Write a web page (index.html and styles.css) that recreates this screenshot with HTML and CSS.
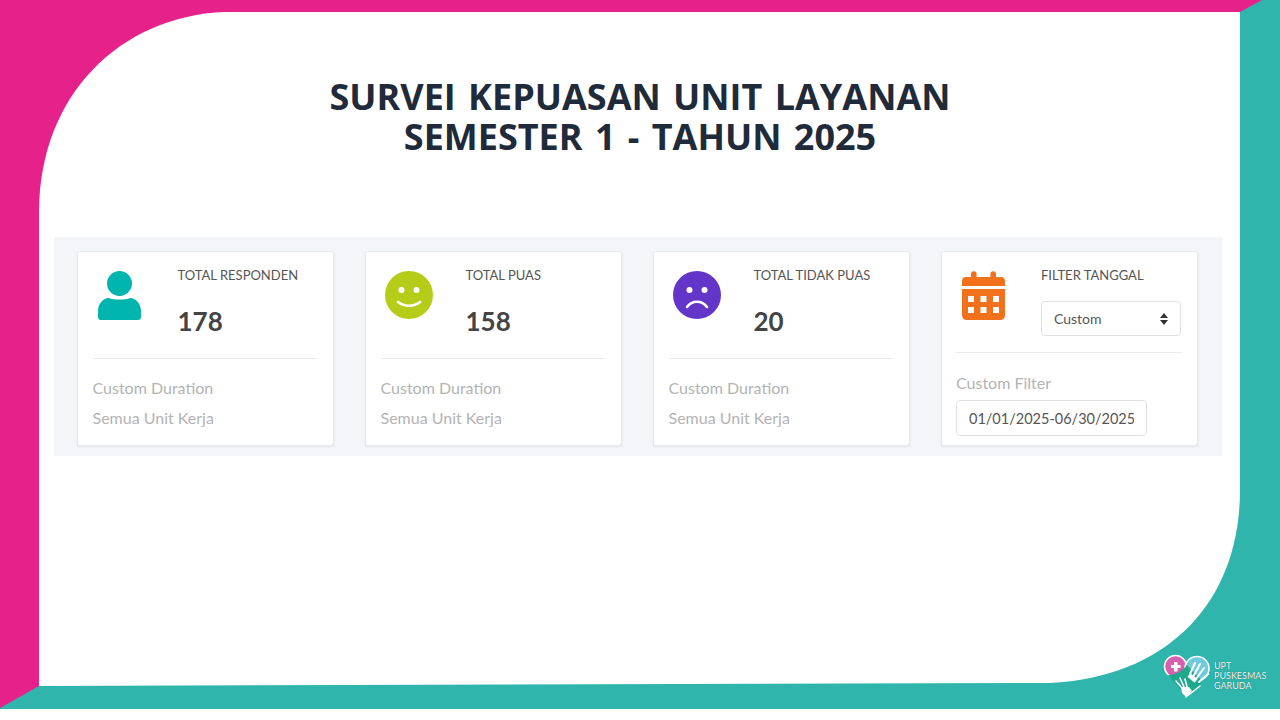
FILE: index.html
```html
<!DOCTYPE html>
<html lang="id">
<head>
    <meta charset="UTF-8">
    <meta name="viewport" content="width=device-width, initial-scale=1.0">
    <title>Survei Kepuasan Unit Layanan</title>
    <link rel="stylesheet" href="styles.css">
</head>
<body>
    <div class="slide">
        <!-- Bingkai slide: pink, teal dan panel putih -->
        <svg class="frame" viewBox="0 0 1280 709" aria-hidden="true">
            <rect width="1280" height="709" fill="#2fb5ab"/>
            <path d="M0 0H1262L1240 12L39 686L0 708Z" fill="#e6228a"/>
            <path d="M225 12H1240V490C1240 600 1170 677 1050 683L39 686V210C40 95 120 16 225 12Z" fill="#fff"/>
        </svg>

        <h1 class="title">SURVEI KEPUASAN UNIT LAYANAN<br>SEMESTER 1 - TAHUN 2025</h1>

        <section class="stats">
            <div class="card">
                <div class="card-head">
                    <svg class="icon icon-user" viewBox="0 0 43 49">
                        <circle cx="21.500" cy="12.500" r="12.500" fill="#00b5ad"/>
                        <path d="M11 27C15 29 28 29 32 27C38 27 43 33 43 40V46C43 48 42 49 40 49H3C1 49 0 48 0 46V40C0 33 5 27 11 27Z" fill="#00b5ad"/>
                    </svg>
                    <div>
                        <div class="label">TOTAL RESPONDEN</div>
                        <div class="value">178</div>
                    </div>
                </div>
                <div class="card-foot">
                    <p>Custom Duration</p>
                    <p>Semua Unit Kerja</p>
                </div>
            </div>

            <div class="card">
                <div class="card-head">
                    <svg class="icon icon-face" viewBox="0 0 48 48">
                        <circle cx="24" cy="24" r="24" fill="#b5cc18"/>
                        <circle cx="16.500" cy="19" r="3" fill="#fff"/>
                        <circle cx="31.500" cy="19" r="3" fill="#fff"/>
                        <path d="M13 31C19 36 29 36 35 31" fill="none" stroke="#fff" stroke-width="2.600" stroke-linecap="round"/>
                    </svg>
                    <div>
                        <div class="label">TOTAL PUAS</div>
                        <div class="value">158</div>
                    </div>
                </div>
                <div class="card-foot">
                    <p>Custom Duration</p>
                    <p>Semua Unit Kerja</p>
                </div>
            </div>

            <div class="card">
                <div class="card-head">
                    <svg class="icon icon-face" viewBox="0 0 48 48">
                        <circle cx="24" cy="24" r="24" fill="#6435c9"/>
                        <circle cx="16.500" cy="19" r="3" fill="#fff"/>
                        <circle cx="31.500" cy="19" r="3" fill="#fff"/>
                        <path d="M14 36C19 29 29 29 34 36" fill="none" stroke="#fff" stroke-width="2.600" stroke-linecap="round"/>
                    </svg>
                    <div>
                        <div class="label">TOTAL TIDAK PUAS</div>
                        <div class="value">20</div>
                    </div>
                </div>
                <div class="card-foot">
                    <p>Custom Duration</p>
                    <p>Semua Unit Kerja</p>
                </div>
            </div>

            <div class="card card-filter">
                <div class="card-head card-head-filter">
                    <svg class="icon icon-calendar" viewBox="0 0 43 49">
                        <path d="M9 3A2.800 2.800 0 0 1 14.600 3V6H28.400V3A2.800 2.800 0 0 1 34 3V6H39C41.500 6 43 7.500 43 10V15H0V10C0 7.500 1.500 6 4 6H9Z" fill="#f2711c"/>
                        <path fill-rule="evenodd" fill="#f2711c" d="M0 18H43V44C43 47 41 49 38 49H5C2 49 0 47 0 44ZM6 25V31H12V25ZM18.500 25V31H24.500V25ZM31 25V31H37V25ZM6 36V42H12V36ZM18.500 36V42H24.500V36ZM31 36V42H37V36Z"/>
                    </svg>
                    <div>
                        <div class="label">FILTER TANGGAL</div>
                        <div class="select-wrap">
                            <select class="select">
                                <option>Custom</option>
                            </select>
                            <svg class="select-arrows" viewBox="0 0 8 12">
                                <path d="M4 0L8 5H0ZM4 12L0 7H8Z" fill="#333"/>
                            </svg>
                        </div>
                    </div>
                </div>
                <div class="card-foot card-foot-filter">
                    <p>Custom Filter</p>
                    <input class="date-input" type="text" value="01/01/2025-06/30/2025">
                </div>
            </div>
        </section>

        <!-- Logo puskesmas -->
        <div class="logo">
            <svg class="logo-mark" viewBox="0 0 50 44">
                <circle cx="13.500" cy="12.500" r="11" fill="#d65fae" stroke="#fff" stroke-width="1.500"/>
                <circle cx="35" cy="14.500" r="12" fill="#6fcbdc" stroke="#fff" stroke-width="1.500"/>
                <path d="M6 21C12 21 20 18 25 11L40 27L37 33L24 42L14 30Z" fill="#1fa98c"/>
                <path d="M9 11H12V8H15.500V11H18.500V14H15.500V17.500H12V14H9Z" fill="#fff"/>
                <path d="M28 20L33 9M31 23L38 10M34 25L42 14M37 28L46 20" stroke="#fff" stroke-width="2" stroke-linecap="round"/>
                <path d="M27 21L34 27" stroke="#fff" stroke-width="4.500"/>
                <path d="M14 27L20 34M18 24L22 33M23 25L25 33" stroke="#fff" stroke-width="1.600" stroke-linecap="round"/>
                <path d="M19 33L27 33L30 37L24 43L20 39Z" fill="#fff"/>
                <path d="M24 43L38 32" stroke="#fff" stroke-width="1.500" stroke-linecap="round"/>
            </svg>
            <div class="logo-text">UPT<br>PUSKESMAS<br>GARUDA</div>
        </div>
    </div>
</body>
</html>
```
FILE: styles.css
```css
* {
    box-sizing: border-box;
}

body {
    margin: 0;
    background-color: #fff;
    font-family: "Lato", "Open Sans", sans-serif;
}

/* Slide utama */
.slide {
    position: relative;
    height: 709px;
    padding: 77px 58px 0 54px;
    overflow: hidden;
}

.frame {
    position: absolute;
    top: 0;
    left: 0;
    width: 1280px;
    height: 709px;
}

.title {
    position: relative;
    margin: 0 -2px 0 2px;
    font-family: "Open Sans", sans-serif;
    font-size: 36px;
    font-weight: 700;
    line-height: 40px;
    word-spacing: 3px;
    text-align: center;
    color: #1f2a3a;
}

/* Baris kartu statistik */
.stats {
    position: relative;
    display: flex;
    gap: 31.500px;
    margin-top: 80px;
    padding: 14px 24px 10px 23px;
    background-color: #f3f5f9;
}

.card {
    width: 256.500px;
    height: 195px;
    padding: 0 15px 0 14.500px;
    background-color: #fff;
    border: 1px solid #e8e9ec;
    border-radius: 3px;
    box-shadow: 0 1px 2px rgba(34, 36, 38, 0.08);
}

.card-filter {
    padding-left: 14px;
}

.card-head {
    display: grid;
    grid-template-columns: 85px 1fr;
    height: 107px;
    padding-top: 16px;
    border-bottom: 1px solid #e9eaed;
}

.card-head-filter {
    height: 101px;
}

.icon {
    display: block;
}

.icon-user {
    width: 43px;
    height: 49px;
    margin: 3px 0 0 5.500px;
}

.icon-face {
    width: 48px;
    height: 48px;
    margin: 3px 0 0 4px;
}

.icon-calendar {
    width: 43px;
    height: 49px;
    margin: 3px 0 0 6px;
}

.label {
    font-size: 13px;
    line-height: 15px;
    color: #555;
}

.value {
    margin-top: 22px;
    font-size: 26px;
    font-weight: 700;
    line-height: 32px;
    color: #444;
}

.card-foot {
    padding-top: 18px;
    font-size: 16px;
    color: #b3b3b3;
}

.card-foot p {
    height: 30px;
    margin: 0;
    line-height: 22px;
}

.card-foot-filter {
    padding-top: 19px;
}

.card-foot-filter p {
    height: 28px;
}

/* Filter tanggal */
.select-wrap {
    position: relative;
    width: 140px;
    margin-top: 18px;
}

.select {
    display: block;
    width: 100%;
    height: 35px;
    padding: 0 12px;
    font-family: inherit;
    font-size: 14px;
    color: #555;
    background-color: #fff;
    border: 1px solid #dfe1e6;
    border-radius: 4px;
    appearance: none;
}

.select-arrows {
    position: absolute;
    top: 12px;
    right: 13px;
    width: 8px;
    height: 12px;
}

.date-input {
    display: block;
    width: 191px;
    height: 36px;
    padding: 0 12px;
    font-family: inherit;
    font-size: 14.500px;
    color: #555;
    background-color: #fff;
    border: 1px solid #dfe1e6;
    border-radius: 4px;
}

/* Logo di pojok kanan bawah */
.logo {
    position: absolute;
    top: 654px;
    left: 1162px;
    display: flex;
    align-items: center;
}

.logo-mark {
    width: 50px;
    height: 44px;
}

.logo-text {
    margin: 0 0 0 2px;
    font-size: 9px;
    line-height: 10px;
    color: #f0f9f8;
    text-shadow: 0 0 1px #1d5b57;
}
```
